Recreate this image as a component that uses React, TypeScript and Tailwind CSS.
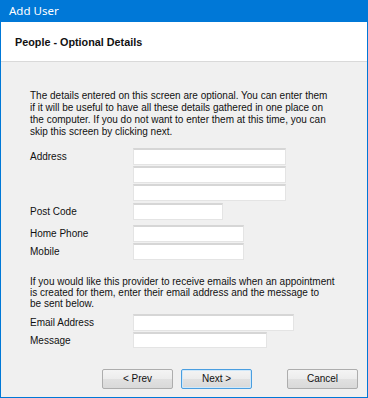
import React from "react";

const Input = ({ w, h = 17 }: { w: number; h?: number }) => (
  <div
    className="bg-white border border-[#e4e4e4] border-t-2 border-t-[#d6d6d6]"
    style={{ width: w, height: h }}
  />
);

const Btn = ({ label, primary }: { label: string; primary?: boolean }) => (
  <button
    className={
      "w-[71px] h-[20px] rounded-[2px] text-[10px] text-[#111] flex items-center justify-center bg-[linear-gradient(to_bottom,#f4f4f4_0%,#ececec_50%,#e1e1e1_50%,#d9d9d9_100%)] " +
      (primary
        ? "border border-[#4a9ee0] shadow-[inset_0_0_0_1px_#cfe8fa]"
        : "border border-[#adadad]")
    }
  >
    {label}
  </button>
);

export default function App() {
  return (
    <div
      className="w-[368px] h-[398px] flex flex-col border-x border-b border-[#0078d7] bg-[#f0f0f0] text-[#111]"
      style={{ fontFamily: '"Liberation Sans", Arial, sans-serif' }}
    >
      <div
        className="h-[22px] shrink-0 bg-[#0078d7] text-white text-[11.5px] flex items-center pl-[9px] -mx-px"
        style={{ fontFamily: '"Noto Sans", "Open Sans", sans-serif' }}
      >
        Add User
      </div>
      <div className="h-[40px] shrink-0 bg-white border-b border-[#d9d9d9] flex items-center pl-[14px] text-[10.8px] font-bold pt-[1px]">
        People - Optional Details
      </div>
      <div className="flex-1 flex flex-col pl-[29px] pt-[28px] text-[10px] leading-[12px]">
        <p className="whitespace-nowrap">
          The details entered on this screen are optional. You can enter them
          <br />
          if it will be useful to have all these details gathered in one place on
          <br />
          the computer. If you do not want to enter them at this time, you can
          <br />
          skip this screen by clicking next.
        </p>
        <div className="mt-[10px] flex">
          <div className="w-[103px] h-[17px] flex items-center">Address</div>
          <div className="flex flex-col gap-[1px]">
            <Input w={153} />
            <Input w={153} />
            <Input w={153} />
          </div>
        </div>
        <div className="mt-[2px] flex">
          <div className="w-[103px] h-[17px] flex items-center">Post Code</div>
          <Input w={90} />
        </div>
        <div className="mt-[5px] flex">
          <div className="w-[103px] h-[17px] flex items-center">Home Phone</div>
          <Input w={111} />
        </div>
        <div className="mt-[1px] flex">
          <div className="w-[103px] h-[17px] flex items-center">Mobile</div>
          <Input w={111} />
        </div>
        <p className="mt-[16px] whitespace-nowrap leading-[11px]">
          If you would like this provider to receive emails when an appointment
          <br />
          is created for them, enter their email address and the message to
          <br />
          be sent below.
        </p>
        <div className="mt-[5px] flex">
          <div className="w-[103px] h-[17px] flex items-center">Email Address</div>
          <Input w={161} />
        </div>
        <div className="mt-[1px] flex">
          <div className="w-[103px] h-[17px] flex items-center">Message</div>
          <Input w={134} h={16} />
        </div>
        <div className="flex-1" />
        <div className="flex justify-end pr-[9px] pb-[8px]">
          <Btn label="< Prev" />
          <div className="w-[8px]" />
          <Btn label="Next >" primary />
          <div className="w-[35px]" />
          <Btn label="Cancel" />
        </div>
      </div>
    </div>
  );
}
